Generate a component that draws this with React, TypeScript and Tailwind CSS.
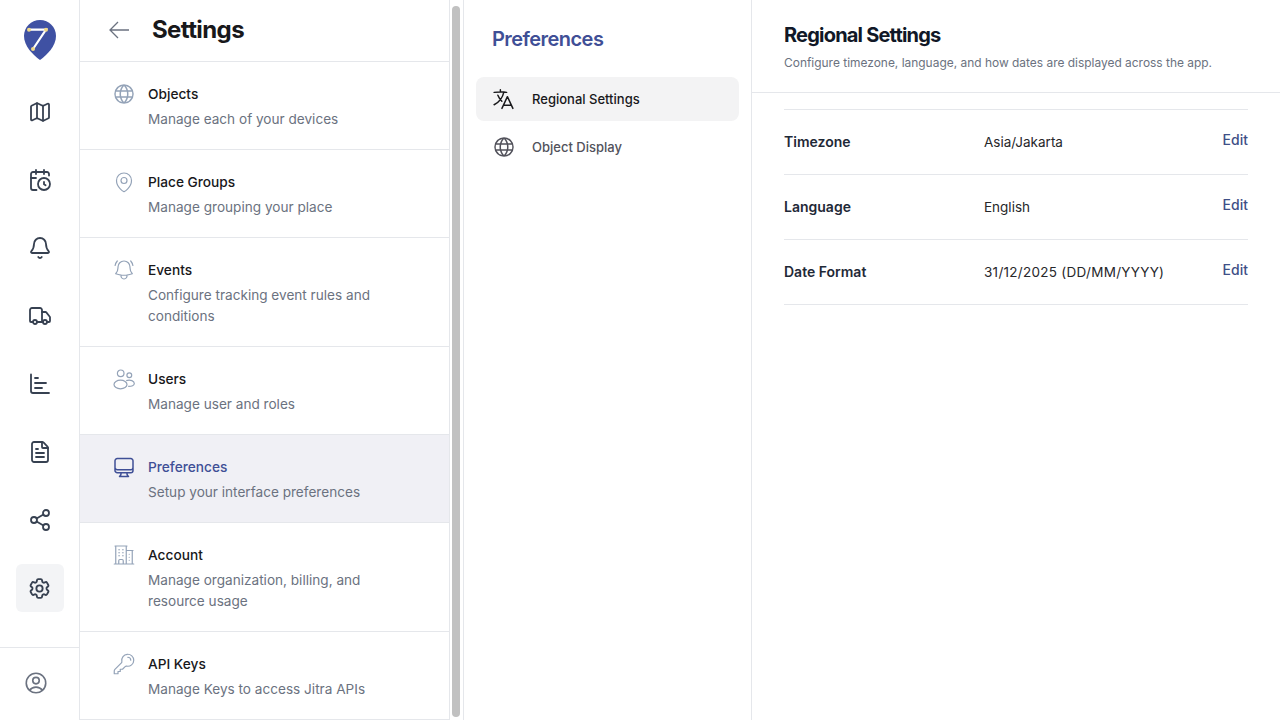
import type { ReactNode } from 'react';
import { CalendarClock, Bell, FileText, Map as MapIcon, Share2, Truck } from 'lucide-react';
import {
  HiOutlineBellAlert,
  HiOutlineBuildingOffice2,
  HiOutlineCog6Tooth,
  HiOutlineComputerDesktop,
  HiOutlineKey,
  HiOutlineLanguage,
  HiOutlineMapPin,
  HiOutlineUserCircle,
} from 'react-icons/hi2';
import { PiGlobe } from 'react-icons/pi';

function Logo() {
  return (
    <svg width="32" height="40" viewBox="0 0 32 40" fill="none">
      <path d="M16 0C7 0 0 7 0 16c0 10 9 19 16 24 7-5 16-14 16-24C32 7 25 0 16 0z" fill="#3f51a3" />
      <path d="M5 9.7H22L9 29" stroke="#fff" strokeWidth="2.2" />
      <circle cx="5" cy="9.7" r="2" fill="#f0d98a" />
      <circle cx="22" cy="9.7" r="2" fill="#f0d98a" />
      <circle cx="9" cy="29" r="2" fill="#f0d98a" />
    </svg>
  );
}

function BackArrow() {
  return (
    <svg width="22" height="20" viewBox="0 0 22 20" fill="none" stroke="currentColor" strokeWidth="1.3">
      <path d="M21 10H2M10 2l-8 8 8 8" />
    </svg>
  );
}

function BarsIcon() {
  return (
    <svg width="24" height="24" viewBox="0 0 24 24" fill="none" stroke="currentColor" strokeWidth="1.8" strokeLinecap="round">
      <path d="M3 2.5V19a2 2 0 0 0 2 2h16" />
      <path d="M7 6h3M7 11h11M7 16h7" />
    </svg>
  );
}

function UsersIcon() {
  return (
    <svg width="24" height="24" viewBox="0 0 24 24" fill="none" stroke="currentColor" strokeWidth="1.2">
      <circle cx="8.7" cy="6.3" r="3.3" />
      <circle cx="17.3" cy="8.3" r="2.4" />
      <ellipse cx="8.5" cy="17.5" rx="6.5" ry="4.3" />
      <path d="M14.2 13.6c4.4-1.2 8.1.4 8.1 2.9 0 1.9-2.4 3-6.1 2.9" />
    </svg>
  );
}

const railItems: { icon: ReactNode; active?: boolean }[] = [
  { icon: <MapIcon size={24} strokeWidth={1.8} /> },
  { icon: <CalendarClock size={24} strokeWidth={1.8} /> },
  { icon: <Bell size={24} strokeWidth={1.8} /> },
  { icon: <Truck size={24} strokeWidth={1.8} /> },
  { icon: <BarsIcon /> },
  { icon: <FileText size={24} strokeWidth={1.8} /> },
  { icon: <Share2 size={24} strokeWidth={1.8} /> },
  { icon: <HiOutlineCog6Tooth size={25} strokeWidth={1.8} />, active: true },
];

const settingsItems: { icon: ReactNode; name: string; lines: ReactNode; active?: boolean }[] = [
  { icon: <PiGlobe size={24} />, name: 'Objects', lines: 'Manage each of your devices' },
  { icon: <HiOutlineMapPin size={24} strokeWidth={1.2} />, name: 'Place Groups', lines: 'Manage grouping your place' },
  { icon: <HiOutlineBellAlert size={24} strokeWidth={1.2} />, name: 'Events', lines: 'Configure tracking event rules and conditions' },
  { icon: <UsersIcon />, name: 'Users', lines: 'Manage user and roles' },
  { icon: <HiOutlineComputerDesktop size={25} strokeWidth={1.5} />, name: 'Preferences', lines: 'Setup your interface preferences', active: true },
  { icon: <HiOutlineBuildingOffice2 size={24} strokeWidth={1.2} />, name: 'Account', lines: 'Manage organization, billing, and resource usage' },
  { icon: <HiOutlineKey size={24} strokeWidth={1.2} />, name: 'API Keys', lines: 'Manage Keys to access Jitra APIs' },
];

const regionalRows = [
  { label: 'Timezone', value: 'Asia/Jakarta', valueClass: '' },
  { label: 'Language', value: 'English', valueClass: '' },
  { label: 'Date Format', value: '31/12/2025 (DD/MM/YYYY)', valueClass: 'tracking-[0.28px]' },
];

export default function App() {
  return (
    <div className="flex h-[720px] w-[1280px] overflow-hidden bg-white font-['Inter',sans-serif] text-[#111827]">
      {/* icon rail */}
      <aside className="flex w-[80px] shrink-0 flex-col border-r border-[#e5e7eb]">
        <div className="flex h-[88px] justify-center pt-[20px]">
          <Logo />
        </div>
        <nav className="flex flex-1 flex-col items-center gap-[20px] text-[#374151]">
          {railItems.map((item, i) => (
            <div
              key={i}
              className={`flex h-[48px] w-[48px] items-center justify-center rounded-md ${item.active ? 'bg-[#f3f4f6]' : ''}`}
            >
              {item.icon}
            </div>
          ))}
        </nav>
        <div className="flex h-[73px] items-center border-t border-[#e5e7eb] pb-[2px] pl-[23px] text-[#6b7280]">
          <HiOutlineUserCircle size={26} />
        </div>
      </aside>

      {/* settings list */}
      <section className="flex w-[370px] shrink-0 flex-col border-r border-[#e5e7eb]">
        <header className="flex h-[62px] shrink-0 items-center border-b border-[#e5e7eb] pb-[2px] pl-[28px] text-[#6b7280]">
          <BackArrow />
          <h1 className="ml-[22px] text-[24px] font-bold tracking-[-0.6px] text-[#18181b]">Settings</h1>
        </header>
        {settingsItems.map((item) => (
          <div
            key={item.name}
            className={`flex border-b border-[#e5e7eb] pb-[19px] pl-[32px] pr-[60px] pt-[20px] ${item.active ? 'bg-[#f0f0f5]' : ''}`}
          >
            <div className={`flex h-[24px] w-[24px] shrink-0 items-center justify-center ${item.active ? 'text-[#3f4f96]' : 'text-[#94a3b8]'}`}>
              {item.icon}
            </div>
            <div className="ml-[12px] pt-[2px]">
              <div className={`text-[13.7px] font-medium leading-[20px] ${item.active ? 'text-[#3f4f96]' : 'text-[#18181b]'}`}>
                {item.name}
              </div>
              <div className="mt-[5px] text-[13.6px] leading-[21px] text-[#6b7280]">{item.lines}</div>
            </div>
          </div>
        ))}
      </section>

      {/* scrollbar */}
      <div className="w-[14px] shrink-0 border-r border-[#e5e7eb] pb-[3px] pl-[2px] pr-[3px] pt-[6px]">
        <div className="h-full w-full rounded-full bg-[#c1c1c1]" />
      </div>

      {/* preferences sub-nav */}
      <section className="w-[288px] shrink-0 border-r border-[#e5e7eb] px-[12px]">
        <h2 className="pl-[16px] pt-[27px] text-[20px] font-semibold leading-[24px] tracking-[-0.55px] text-[#3f4f96]">
          Preferences
        </h2>
        <div className="mt-[26px] flex h-[44px] items-center rounded-lg bg-[#f3f3f4] pl-[15px] pr-[12px] text-[#18181b]">
          <div className="flex w-[25px] justify-center">
            <HiOutlineLanguage size={26} strokeWidth={1.4} />
          </div>
          <span className="ml-[16px] pt-[2px] text-[13px] font-medium">Regional Settings</span>
        </div>
        <div className="mt-[4px] flex h-[44px] items-center pl-[16px] pr-[12px] text-[#52525b]">
          <div className="flex w-[24px] justify-center">
            <PiGlobe size={24} />
          </div>
          <span className="ml-[16px] pt-[2px] text-[13px] font-medium">Object Display</span>
        </div>
      </section>

      {/* regional settings */}
      <main className="flex-1">
        <header className="h-[93px] border-b border-[#e5e7eb] px-[32px] pt-[23px]">
          <h2 className="text-[20px] font-bold leading-[24px] tracking-[-0.8px] text-[#111827]">Regional Settings</h2>
          <p className="mt-[7px] text-[11.95px] leading-[18px] text-[#6b7280]">
            Configure timezone, language, and how dates are displayed across the app.
          </p>
        </header>
        <div className="mx-[32px] mt-[16px] border-t border-[#e5e7eb]">
          {regionalRows.map((row) => (
            <div key={row.label} className="flex h-[65px] items-center border-b border-[#e5e7eb] pb-[2px] text-[13.5px]">
              <div className="w-[200px] text-[14px] font-semibold text-[#1f2937]">{row.label}</div>
              <div className={`flex-1 pt-[2px] text-[#27272a] ${row.valueClass}`}>{row.value}</div>
              <button type="button" className="mb-[4px] text-[14px] font-medium text-[#3f4f86]">
                Edit
              </button>
            </div>
          ))}
        </div>
      </main>
    </div>
  );
}
